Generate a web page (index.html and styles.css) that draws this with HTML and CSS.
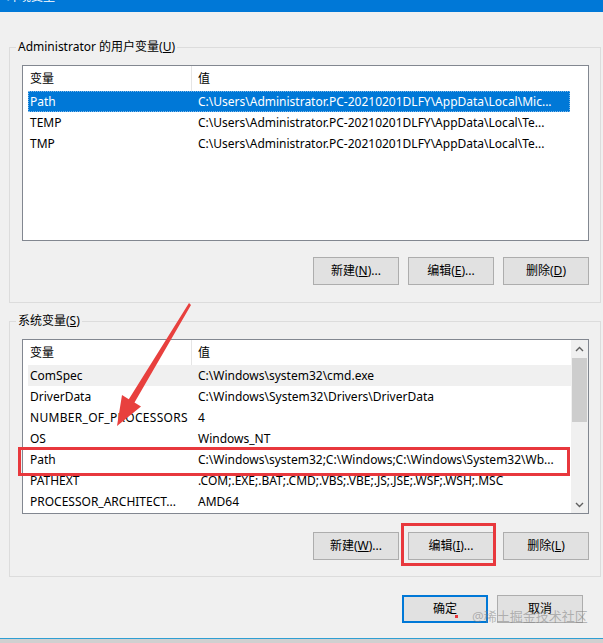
FILE: index.html
```html
<!DOCTYPE html>
<html lang="zh-CN">
<head>
<meta charset="utf-8">
<title>环境变量</title>
<link rel="stylesheet" href="styles.css">
</head>
<body>
<div class="window">
  <div class="titlebar"><span class="title">环境变量</span></div>
  <div class="content">
    <fieldset class="group group-user">
      <legend>Administrator 的用户变量(<u>U</u>)</legend>
      <div class="listview">
        <div class="lv-main">
          <div class="lv-header"><div class="col1">变量</div><div class="col2">值</div></div>
          <div class="lv-row selected"><div class="col1">Path</div><div class="col2">C:\Users\Administrator.PC-20210201DLFY\AppData\Local\Mic...</div></div>
          <div class="lv-row"><div class="col1">TEMP</div><div class="col2">C:\Users\Administrator.PC-20210201DLFY\AppData\Local\Te...</div></div>
          <div class="lv-row"><div class="col1">TMP</div><div class="col2">C:\Users\Administrator.PC-20210201DLFY\AppData\Local\Te...</div></div>
        </div>
      </div>
      <div class="btn-row">
        <button class="btn">新建(<u>N</u>)...</button>
        <button class="btn">编辑(<u>E</u>)...</button>
        <button class="btn">删除(<u>D</u>)</button>
      </div>
    </fieldset>
    <fieldset class="group group-system">
      <legend>系统变量(<u>S</u>)</legend>
      <div class="listview">
        <div class="lv-main">
          <div class="lv-header"><div class="col1">变量</div><div class="col2">值</div></div>
          <div class="lv-row hot"><div class="col1">ComSpec</div><div class="col2">C:\Windows\system32\cmd.exe</div></div>
          <div class="lv-row"><div class="col1">DriverData</div><div class="col2">C:\Windows\System32\Drivers\DriverData</div></div>
          <div class="lv-row"><div class="col1 wide">NUMBER_OF_PROCESSORS</div><div class="col2">4</div></div>
          <div class="lv-row"><div class="col1">OS</div><div class="col2">Windows_NT</div></div>
          <div class="lv-row"><div class="col1">Path</div><div class="col2">C:\Windows\system32;C:\Windows;C:\Windows\System32\Wb...</div></div>
          <div class="lv-row"><div class="col1">PATHEXT</div><div class="col2">.COM;.EXE;.BAT;.CMD;.VBS;.VBE;.JS;.JSE;.WSF;.WSH;.MSC</div></div>
          <div class="lv-row"><div class="col1">PROCESSOR_ARCHITECT...</div><div class="col2">AMD64</div></div>
        </div>
        <div class="scrollbar">
          <div class="sb-btn"><svg width="9" height="6" viewBox="0 0 9 6"><path d="M1 5 L4.5 1.5 L8 5" fill="none" stroke="#606060" stroke-width="1.4"/></svg></div>
          <div class="sb-track"><div class="sb-thumb"></div></div>
          <div class="sb-btn"><svg width="9" height="6" viewBox="0 0 9 6"><path d="M1 1 L4.5 4.5 L8 1" fill="none" stroke="#606060" stroke-width="1.4"/></svg></div>
        </div>
      </div>
      <div class="btn-row">
        <button class="btn">新建(<u>W</u>)...</button>
        <button class="btn">编辑(<u>I</u>)...</button>
        <button class="btn">删除(<u>L</u>)</button>
      </div>
    </fieldset>
  </div>
  <div class="dialog-buttons">
    <button class="btn default">确定</button>
    <button class="btn">取消</button>
  </div>
  <div class="bottom-edge"></div>

  <div class="mark mark-path"></div>
  <div class="mark mark-edit"></div>
  <svg class="arrow" width="603" height="643" viewBox="0 0 603 643">
    <polygon points="189,303 191,305 134.5,402.5 141,406.5 117,426 122,395 128.8,399.2" fill="#e8403e"/>
  </svg>
  <div class="dot"></div>
  <div class="watermark">@稀土掘金技术社区</div>
</div>
</body>
</html>
```
FILE: styles.css
```css
* { box-sizing: border-box; }
html, body { margin: 0; padding: 0; }
body {
  width: 603px;
  height: 643px;
  overflow: hidden;
  background: #f0f0f0;
  color: #000;
  font-family: "Noto Sans", "Noto Sans CJK SC", sans-serif;
  font-size: 12px;
  line-height: 16px;
}
.window {
  position: relative;
  height: 643px;
  display: flex;
  flex-direction: column;
}
.titlebar {
  height: 12px;
  background: #0078d7;
  overflow: hidden;
  padding-left: 7px;
}
.title {
  display: block;
  color: #fff;
  font-size: 12px;
  line-height: 12px;
  margin-top: -9px;
}
.content {
  padding: 27px 2px 0 9px;
}
.group {
  margin: 0;
  min-width: 0;
  border: 1px solid #dcdcdc;
  padding: 0 11px 17px 12px;
}
.group legend {
  margin-left: -6px;
  padding: 0 2px;
  line-height: 16px;
}
.group-system {
  margin-top: 10px;
  padding-bottom: 16px;
}
.listview {
  margin-top: 10px;
  height: 176px;
  border: 1px solid #828790;
  background: #fff;
  display: flex;
}
.group-system .listview { height: 175px; }
.lv-main {
  flex: 1;
  min-width: 0;
  padding-left: 5px;
}
.group-user .lv-main { padding-right: 18px; }
.lv-header, .lv-row {
  display: grid;
  grid-template-columns: 164px 1fr;
  align-items: center;
}
.lv-header { height: 25px; }
.lv-header .col1 {
  height: 100%;
  display: flex;
  align-items: center;
  border-right: 1px solid #e5e5e5;
}
.lv-row { height: 21px; }
.col1, .col2 {
  white-space: nowrap;
  overflow: hidden;
}
.col1 { padding-left: 2px; }
.col1.wide { letter-spacing: 0.3px; }
.col2 { padding-left: 6px; }
.lv-row.selected {
  background: #0078d7;
  color: #fff;
  outline: 1px dotted #7fb8e8;
  outline-offset: -1px;
}
.lv-row.hot { background: #f0f0f0; }
.scrollbar {
  width: 17px;
  background: #f0f0f0;
  display: flex;
  flex-direction: column;
}
.sb-btn {
  height: 17px;
  display: flex;
  align-items: center;
  justify-content: center;
}
.sb-track {
  flex: 1;
  padding: 1px 1px 0;
}
.sb-thumb {
  height: 64px;
  background: #cdcdcd;
}
.btn-row {
  display: flex;
  justify-content: flex-end;
  gap: 9px;
  margin-top: 16px;
}
.group-system .btn-row { margin-top: 18px; }
.btn {
  width: 86px;
  height: 28px;
  padding: 0;
  margin: 0;
  background: #e1e1e1;
  border: 1px solid #adadad;
  color: #000;
  font: inherit;
  display: flex;
  align-items: center;
  justify-content: center;
}
.btn.default { border: 2px solid #0078d7; }
.dialog-buttons {
  display: flex;
  justify-content: flex-end;
  gap: 9px;
  padding-right: 20px;
  margin-top: 18px;
}
.bottom-edge {
  margin-top: auto;
  height: 5px;
  border-top: 1px solid #2f9fd3;
  background: #d0d0d0;
}
.mark {
  position: absolute;
  border: 3px solid #e8383d;
}
.mark-path { left: 18px; top: 447px; width: 552px; height: 29px; }
.mark-edit { left: 401px; top: 523px; width: 95px; height: 43px; }
.arrow {
  position: absolute;
  left: 0;
  top: 0;
  pointer-events: none;
}
.dot {
  position: absolute;
  left: 455px;
  top: 615px;
  width: 3px;
  height: 3px;
  background: #e8383d;
}
.watermark {
  position: absolute;
  left: 472px;
  top: 607px;
  font-size: 13px;
  line-height: 18px;
  color: rgba(130, 130, 130, 0.55);
  white-space: nowrap;
}
```
